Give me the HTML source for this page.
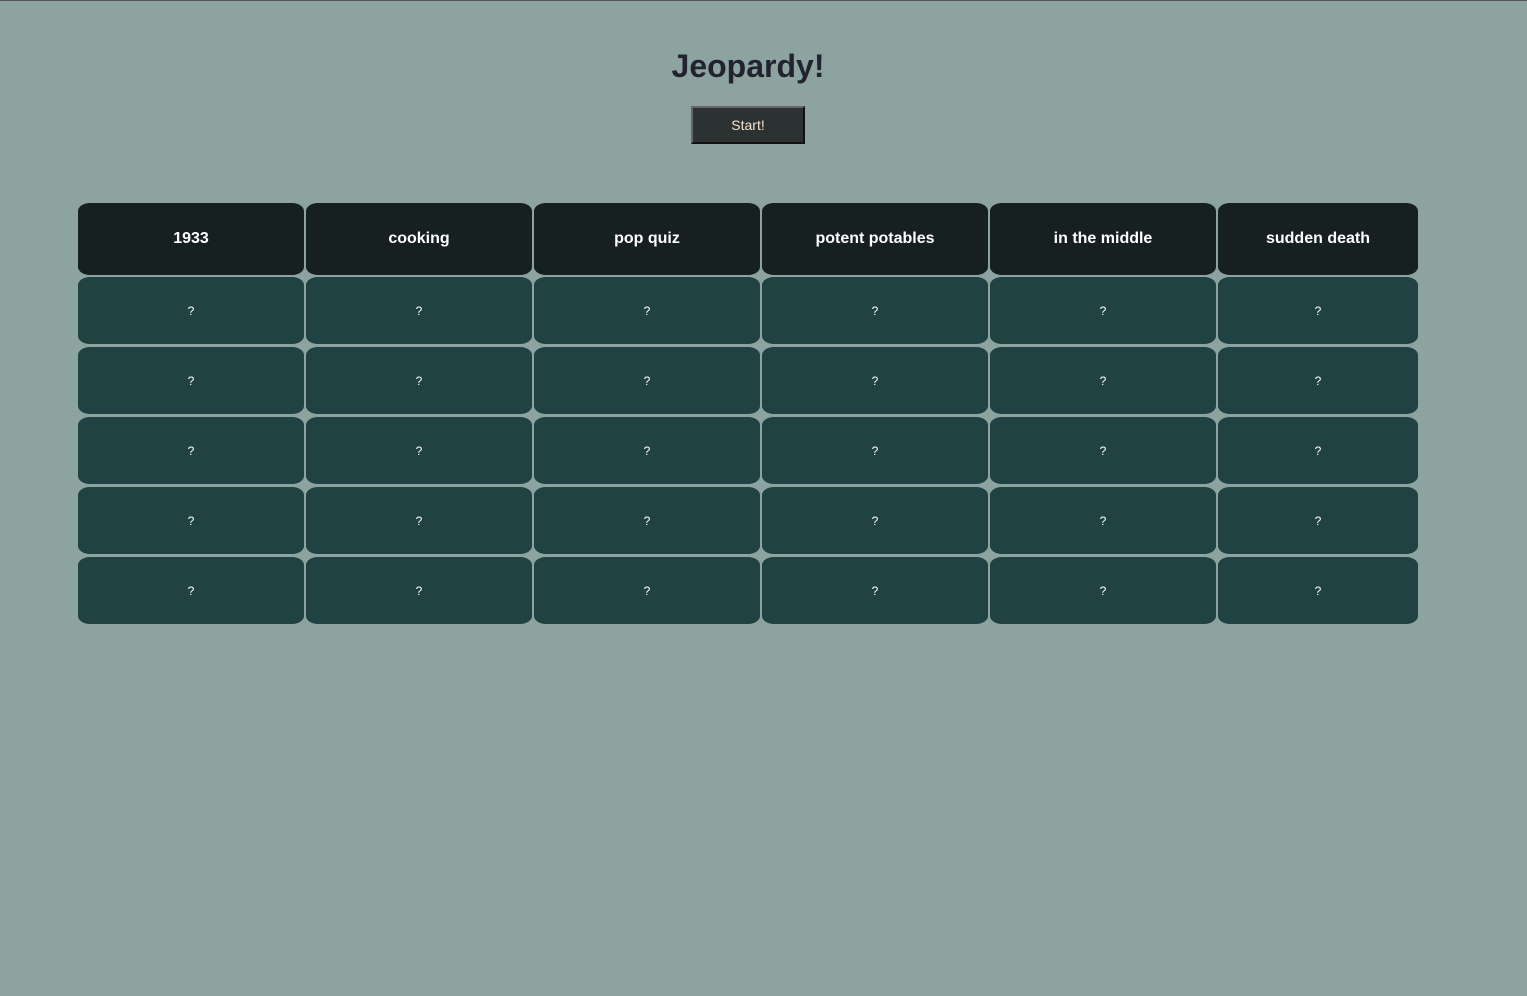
<!DOCTYPE html>
<html><head><style>
body{margin:0;background:#8ca39f;font-family:"Liberation Sans",Arial,sans-serif;width:1527px;height:996px;overflow:hidden;position:relative}
.top{position:absolute;left:0;top:0;width:100%;height:1px;background:#555}
h1{position:absolute;left:0;width:1496px;top:47px;margin:0;text-align:center;font-size:32px;color:#22232f;font-weight:bold;line-height:38px}
.btn{position:absolute;left:691px;top:106px;width:114px;height:38px;box-sizing:border-box;background:#2c3131;border:2px solid;border-color:#666 #111 #111 #666;color:#f3e4d4;font-size:14px;text-align:center;line-height:34px}
.c{position:absolute;display:flex;align-items:center;justify-content:center;color:#fff;border-radius:12px/8px;box-sizing:border-box}
.h{background:#172020;font-weight:bold;font-size:16px}
.q{background:#204242;font-size:12px}
</style></head><body>
<div class="top"></div>
<h1>Jeopardy!</h1>
<div class="btn">Start!</div>
<div id="g"></div>
<script>
var xs=[78,306,534,762,990,1218],ws=[226,226,226,226,226,200];
var hs=["1933","cooking","pop quiz","potent potables","in the middle","sudden death"];
var ys=[277,347,417,487,557],h='';
for(var i=0;i<6;i++){
h+='<div class="c h" style="left:'+xs[i]+'px;top:203px;width:'+ws[i]+'px;height:72px">'+hs[i]+'</div>';
for(var j=0;j<5;j++)h+='<div class="c q" style="left:'+xs[i]+'px;top:'+ys[j]+'px;width:'+ws[i]+'px;height:67px">?</div>';
}
document.getElementById('g').innerHTML=h;
</script>
</body></html>
